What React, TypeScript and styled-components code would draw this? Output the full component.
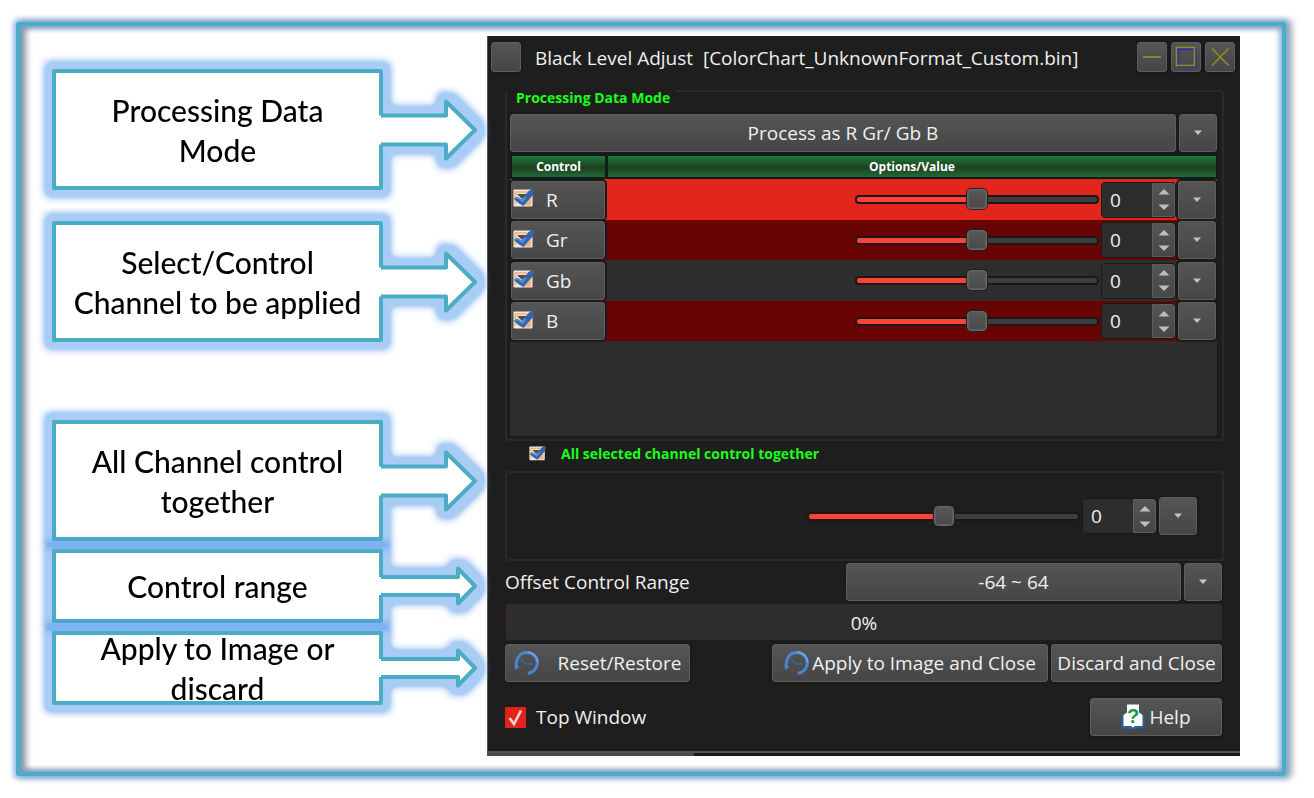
import React, { useState } from 'react';
import styled, { createGlobalStyle } from 'styled-components';

const GlobalStyle = createGlobalStyle`
  *, *::before, *::after { box-sizing: border-box; }
  html, body { margin: 0; background: #fff; }
  button, input, select { font: inherit; color: inherit; margin: 0; }
`;

/* ---------- page frame ---------- */

const Page = styled.div`
  padding: 22px 28px 22px 16px;
`;

const Frame = styled.main`
  display: flex;
  align-items: flex-start;
  gap: 10px;
  padding: 10px 42px 16px 32px;
  border: 4px solid #4bacc6;
  border-radius: 2px;
  box-shadow:
    0 0 5px 3px rgba(80, 140, 225, 0.55),
    inset 0 0 5px 3px rgba(80, 125, 200, 0.6),
    5px 0 6px 2px rgba(0, 0, 0, 0.25),
    inset 6px 0 6px 1px rgba(0, 0, 0, 0.3);
`;

/* ---------- callouts ---------- */

const CalloutColumn = styled.div`
  flex: 0 0 425px;
  display: flex;
  flex-direction: column;
  gap: 78px;
  padding-top: 33px;
`;

const CalloutGroup = styled.div<{ $gap: number }>`
  display: flex;
  flex-direction: column;
  gap: ${(p) => p.$gap}px;
`;

const CalloutRoot = styled.div`
  display: flex;
  align-items: center;
  filter: url(#callout-glow);
`;

const CalloutBox = styled.p<{ $height: number }>`
  flex: 1;
  display: flex;
  align-items: center;
  justify-content: center;
  height: ${(p) => p.$height}px;
  margin: 0;
  padding: 0 8px;
  border: 4px solid #4bacc6;
  border-radius: 2px;
  background: #fff;
  color: #000;
  font: 500 30px/40px Lato, "Liberation Sans", sans-serif;
  text-align: center;
  white-space: pre-line;
`;

const CalloutArrow = styled.svg`
  flex: none;
  margin-left: -4px;
`;

const HiddenDefs = styled.svg`
  position: absolute;
`;

function Callout({ text, size }: { text: string; size: 'large' | 'small' }) {
  const large = size === 'large';
  const d = large
    ? 'M2 17.5H67V3.5L96 32L67 60.5V46.5H2'
    : 'M2 23H79V14.5L96 32L79 49.5V41H2';
  return (
    <CalloutRoot>
      <CalloutBox $height={large ? 121 : 74}>{text}</CalloutBox>
      <CalloutArrow width="98" height="64" viewBox="0 0 98 64" aria-hidden="true">
        <path d={large ? 'M0 17.5H6V46.5H0Z' : 'M0 23H6V41H0Z'} fill="#fff" />
        <path d={d} fill="#fff" stroke="#4bacc6" strokeWidth="4" strokeLinejoin="round" />
      </CalloutArrow>
    </CalloutRoot>
  );
}

/* ---------- dialog ---------- */

const Dialog = styled.section`
  flex: 1;
  min-width: 0;
  min-height: 720px;
  border-left: 1px solid #555;
  background: #1e1e1e;
  color: #f0f0f0;
  font: 19px/24px "Open Sans", "Noto Sans", sans-serif;
  display: flex;
  flex-direction: column;
`;

const raised = `
  border: 1px solid #5e5e5e;
  border-radius: 3px;
  background: linear-gradient(#555, #464646);
  box-shadow: 0 0 0 2px #1a1a1a;
`;

const TitleBar = styled.header`
  display: flex;
  align-items: center;
  gap: 4px;
  height: 54px;
  padding: 6px 5px 18px 3px;
`;

const Title = styled.h1`
  flex: 1;
  margin: 0;
  padding: 2px 0 0 10px;
  font: inherit;
  white-space: pre;
  overflow: hidden;
`;

const WindowButton = styled.button`
  ${raised}
  display: grid;
  place-items: center;
  width: 30px;
  height: 30px;
  padding: 0;
`;

const DialogBody = styled.div`
  display: flex;
  flex-direction: column;
  padding: 0 18px 0 17px;
`;

const Group = styled.section`
  border: 2px solid #2a2a2a;
  border-radius: 4px;
  margin-right: -2px;
`;

const ModeGroup = styled(Group)`
  height: 351px;
  padding: 0 5px 4px 3px;
`;

const GroupHeading = styled.h2`
  width: fit-content;
  height: 18px;
  margin: -2px 0 6px -3px;
  padding: 0 5px 0 9px;
  background: #1e1e1e;
  color: #1cff1c;
  font: bold 14px/16px "Open Sans", "Noto Sans", sans-serif;
`;

const ComboRow = styled.div<{ $width?: string }>`
  display: grid;
  grid-template-columns: 1fr 38px;
  gap: 3px;
  width: ${(p) => p.$width ?? 'auto'};
`;

const Combo = styled.select`
  ${raised}
  appearance: none;
  height: 38px;
  padding: 0;
  text-align: center;
  text-align-last: center;
`;

const SquareButton = styled.button`
  ${raised}
  display: grid;
  place-items: center;
  width: 38px;
  height: 38px;
  padding: 0;
`;

const TablePanel = styled.div`
  height: 281px;
  margin-top: 3px;
  background: #2d2d2d;
  box-shadow: 0 0 0 1px #191919;
`;

const ChannelTable = styled.table`
  width: 100%;
  border-collapse: separate;
  border-spacing: 0;
  table-layout: fixed;
`;

const HeadCell = styled.th<{ $width?: number }>`
  width: ${(p) => (p.$width ? `${p.$width}px` : 'auto')};
  height: 24px;
  padding: 0;
  border: solid #0d1f14;
  border-width: 1px 1px 2px 2px;
  background: linear-gradient(#1b7a3e, #1f4020 55%, #1f6b38);
  color: #fff;
  font: bold 12px/20px "Open Sans", "Noto Sans", sans-serif;
`;

const ChannelRow = styled.tr<{ $color: string }>`
  height: 40px;
  background: ${(p) => p.$color};
  &:nth-child(odd) { height: 41px; }
`;

const Cell = styled.td`
  padding: 0 1px;
`;

const ChannelToggle = styled.label`
  ${raised}
  display: flex;
  align-items: center;
  gap: 12px;
  height: 38px;
  padding-left: 1px;
`;

const Controls = styled.div`
  display: flex;
  align-items: center;
  justify-content: flex-end;
`;

const TickBoxRoot = styled.span<{ $size: number }>`
  position: relative;
  display: block;
  width: ${(p) => p.$size}px;
  height: ${(p) => p.$size}px;
  svg { display: block; pointer-events: none; }
`;

const TickInput = styled.input`
  appearance: none;
  position: absolute;
  inset: 0;
`;

const Slider = styled.input<{ $width: number }>`
  appearance: none;
  width: ${(p) => p.$width}px;
  height: 24px;
  margin-right: 2px;
  background: transparent;
  &::-webkit-slider-runnable-track {
    height: 9px;
    border: 2px solid #1c1616;
    border-radius: 4px;
    background: linear-gradient(90deg, #fb4338 50%, #3d3d3d 50%);
  }
  &::-webkit-slider-thumb {
    appearance: none;
    width: 20px;
    height: 20px;
    margin-top: -8px;
    border: 1px solid #666;
    border-radius: 4px;
    background: linear-gradient(#575757, #4a4a4a);
    box-shadow: inset 0 0 0 1px #5c5c5c, 0 0 0 1px #222;
  }
`;

const SpinRoot = styled.span`
  display: flex;
  width: 75px;
  height: 36px;
  margin-right: 2px;
  border: 1px solid #191919;
  border-radius: 4px;
  background: #2d2d2d;
  overflow: hidden;
`;

const SpinInput = styled.input`
  appearance: textfield;
  width: 50px;
  padding: 0 0 0 8px;
  border: 0;
  background: #2d2d2d;
  &::-webkit-inner-spin-button { appearance: none; }
`;

const SpinButtons = styled.span`
  display: grid;
  flex: 1;
  grid-template-rows: 1fr 1fr;
  border: 1px solid #5e5e5e;
  border-radius: 0 3px 3px 0;
  background: linear-gradient(#555, #464646);
`;

const SpinStep = styled.button`
  display: grid;
  place-items: center;
  padding: 0;
  border: 0;
  background: none;
`;

const TogetherLabel = styled.label`
  display: flex;
  align-items: center;
  gap: 15px;
  height: 26px;
  margin: 0 0 4px 24px;
  color: #1cff1c;
  font: bold 14px/18px "Open Sans", "Noto Sans", sans-serif;
`;

const TogetherGroup = styled(Group)`
  display: flex;
  align-items: center;
  justify-content: flex-end;
  height: 90px;
  padding-right: 25px;
`;

const Row = styled.div<{ $top: number }>`
  display: flex;
  align-items: center;
  justify-content: space-between;
  margin-top: ${(p) => p.$top}px;
`;

const Progress = styled.div`
  height: 36px;
  margin-top: 3px;
  border-radius: 3px;
  border-left: 1px solid #3a1515;
  background: #2d2d2d;
  line-height: 38px;
  text-align: center;
`;

const ButtonPair = styled.div`
  display: flex;
  gap: 3px;
`;

const ActionButton = styled.button<{ $width: number; $gap?: number }>`
  ${raised}
  display: flex;
  align-items: center;
  justify-content: center;
  gap: ${(p) => p.$gap ?? 4}px;
  width: ${(p) => p.$width}px;
  height: 38px;
  padding: 0;
  white-space: nowrap;
`;

const TopWindow = styled.label`
  display: flex;
  align-items: center;
  gap: 10px;
`;

const BottomEdge = styled.div`
  height: 5px;
  margin-top: auto;
  border-top: 2px solid #555;
  background: linear-gradient(90deg, #484848 206px, #1a1a1a 206px);
`;

/* ---------- icons ---------- */

const DownArrow = () => (
  <svg width="10" height="6" viewBox="0 0 10 6" aria-hidden="true">
    <path d="M1 0.5H9L5 5Z" fill="#c4c4c4" />
  </svg>
);

const StepArrow = ({ up }: { up?: boolean }) => (
  <svg width="12" height="7" viewBox="0 0 12 7" aria-hidden="true">
    <path d={up ? 'M0.5 6.5H11.5L6 1Z' : 'M0.5 0.5H11.5L6 6Z'} fill="#bdbdbd" />
  </svg>
);

const CheckArt = ({ size }: { size: number }) => (
  <svg width={size} height={size} viewBox="0 0 21 21" aria-hidden="true">
    <rect x="0.5" y="0.5" width="19" height="17" rx="1" fill="#f3e6da" />
    <path d="M2.5 15V3H14" fill="none" stroke="#f2ac72" strokeWidth="1.6" />
    <path d="M11 16.5H18V8Z" fill="#f7b27a" />
    <path d="M4 5H14L9 10Z" fill="#4c4e52" />
    <path d="M0.5 9.5L4.5 7.8L9 10.8L15 2.5L18.5 0L20.8 1.8L20 6L13.5 13.5L10.5 17L6 14.5Z" fill="#2f66ae" />
    <path d="M1.5 9.8L4.5 8.8L9.5 12.2L13 8" fill="none" stroke="#5292dc" strokeWidth="1.5" />
  </svg>
);

const RestoreIcon = () => (
  <svg width="26" height="26" viewBox="0 0 26 26" aria-hidden="true">
    <path d="M2.5 17C1.5 9 5.5 2.8 13 2.6C19.5 2.6 23.3 7.5 23.3 12.6C23.3 18.5 19 22.8 13.8 23.2" fill="none" stroke="#4a86cf" strokeWidth="3" />
    <path d="M13.5 2.2C20 2.6 23.6 7.5 23.8 12.6" fill="none" stroke="#78adea" strokeWidth="1.2" />
    <path d="M0.5 14.5L5.5 17L1 20Z" fill="#4a86cf" />
    <path d="M6.5 9L12.5 14H19" fill="none" stroke="#3d6a9c" strokeWidth="1.3" />
  </svg>
);

const HelpIcon = () => (
  <svg width="24" height="26" viewBox="0 0 24 26" aria-hidden="true">
    <path d="M0.5 12L3 9V22H21V9L23.5 12V24.5H15L12 26L9 24.5H0.5Z" fill="#2c5f9e" />
    <path d="M2.5 11L6 8.5V0.5H18V8.5L21.5 11V22H14L12 23.5L10 22H2.5Z" fill="#fff" />
    <text x="12" y="19" textAnchor="middle" fontFamily="Liberation Sans, sans-serif" fontWeight="bold" fontSize="20" fill="#119a4c">?</text>
  </svg>
);

const TopTick = () => (
  <svg width="21" height="21" viewBox="0 0 21 21" aria-hidden="true">
    <rect width="21" height="21" rx="1" fill="#e3221a" />
    <path d="M4.5 11L9 17L16 3.5" fill="none" stroke="#e6d6d6" strokeWidth="2.6" />
  </svg>
);

/* ---------- parts ---------- */

function TickBox({ size, children }: { size: number; children: React.ReactNode }) {
  return (
    <TickBoxRoot $size={size}>
      <TickInput type="checkbox" defaultChecked />
      {children}
    </TickBoxRoot>
  );
}

function ValueControl({ name, width }: { name: string; width: number }) {
  const [value, setValue] = useState(0);
  return (
    <Controls>
      <Slider
        $width={width}
        type="range"
        min={-64}
        max={64}
        value={value}
        aria-label={`${name} offset`}
        onChange={(e) => setValue(Number(e.target.value))}
      />
      <SpinRoot>
        <SpinInput
          type="number"
          min={-64}
          max={64}
          value={value}
          aria-label={`${name} value`}
          onChange={(e) => setValue(Number(e.target.value))}
        />
        <SpinButtons>
          <SpinStep type="button" aria-label={`Increase ${name}`} onClick={() => setValue(Math.min(64, value + 1))}>
            <StepArrow up />
          </SpinStep>
          <SpinStep type="button" aria-label={`Decrease ${name}`} onClick={() => setValue(Math.max(-64, value - 1))}>
            <StepArrow />
          </SpinStep>
        </SpinButtons>
      </SpinRoot>
      <SquareButton type="button" aria-label={`${name} menu`}>
        <DownArrow />
      </SquareButton>
    </Controls>
  );
}

const channels = [
  { name: 'R', color: '#e3261b' },
  { name: 'Gr', color: '#680504' },
  { name: 'Gb', color: '#2d2d2d' },
  { name: 'B', color: '#680504' },
];

export default function App() {
  return (
    <>
      <GlobalStyle />
      <HiddenDefs width="0" height="0" aria-hidden="true">
        <filter id="callout-glow" x="-10%" y="-40%" width="120%" height="180%" colorInterpolationFilters="sRGB">
          <feMorphology in="SourceAlpha" operator="dilate" radius="6" />
          <feGaussianBlur stdDeviation="4" />
          <feComponentTransfer result="halo">
            <feFuncA type="linear" slope="2.4" />
          </feComponentTransfer>
          <feFlood floodColor="#5097eb" floodOpacity="0.49" />
          <feComposite in2="halo" operator="in" />
          <feMerge>
            <feMergeNode />
            <feMergeNode in="SourceGraphic" />
          </feMerge>
        </filter>
      </HiddenDefs>
      <Page>
        <Frame>
          <CalloutColumn>
            <CalloutGroup $gap={31}>
              <Callout size="large" text={'Processing Data\nMode'} />
              <Callout size="large" text={'Select/Control\nChannel to be applied'} />
            </CalloutGroup>
            <CalloutGroup $gap={8}>
              <Callout size="large" text={'All Channel control\ntogether'} />
              <Callout size="small" text="Control range" />
              <Callout size="small" text={'Apply to Image or\ndiscard'} />
            </CalloutGroup>
          </CalloutColumn>

          <Dialog aria-label="Black Level Adjust">
            <TitleBar>
              <WindowButton type="button" aria-label="Window menu" />
              <Title>{'Black Level Adjust  [ColorChart_UnknownFormat_Custom.bin]'}</Title>
              <WindowButton type="button" aria-label="Minimize">
                <svg width="20" height="20" viewBox="0 0 20 20"><path d="M1 10H19" stroke="#8f8a1c" strokeWidth="1.8" /></svg>
              </WindowButton>
              <WindowButton type="button" aria-label="Maximize">
                <svg width="22" height="22" viewBox="0 0 22 22" fill="none">
                  <rect x="3" y="3" width="17.5" height="17.5" stroke="#2c2ca8" strokeWidth="2" />
                  <rect x="1.5" y="1.5" width="18" height="18" stroke="#918b22" strokeWidth="1.6" />
                </svg>
              </WindowButton>
              <WindowButton type="button" aria-label="Close">
                <svg width="20" height="20" viewBox="0 0 20 20"><path d="M2 1.5L18.5 18.5M18.5 1.5L2 18.5" stroke="#918b22" strokeWidth="1.7" /></svg>
              </WindowButton>
            </TitleBar>

            <DialogBody>
              <ModeGroup aria-labelledby="mode-heading">
                <GroupHeading id="mode-heading">Processing Data Mode</GroupHeading>
                <ComboRow>
                  <Combo aria-label="Processing data mode">
                    <option>Process as R Gr/ Gb B</option>
                  </Combo>
                  <SquareButton type="button" aria-label="Mode menu"><DownArrow /></SquareButton>
                </ComboRow>
                <TablePanel>
                  <ChannelTable>
                    <thead>
                      <tr>
                        <HeadCell $width={96}>Control</HeadCell>
                        <HeadCell>Options/Value</HeadCell>
                      </tr>
                    </thead>
                    <tbody>
                      {channels.map((c) => (
                        <ChannelRow key={c.name} $color={c.color}>
                          <Cell>
                            <ChannelToggle>
                              <TickBox size={21}><CheckArt size={21} /></TickBox>
                              {c.name}
                            </ChannelToggle>
                          </Cell>
                          <Cell>
                            <ValueControl name={c.name} width={244} />
                          </Cell>
                        </ChannelRow>
                      ))}
                    </tbody>
                  </ChannelTable>
                </TablePanel>
              </ModeGroup>

              <TogetherLabel>
                <TickBox size={17}><CheckArt size={17} /></TickBox>
                All selected channel control together
              </TogetherLabel>
              <TogetherGroup aria-label="All selected channels">
                <ValueControl name="All channels" width={273} />
              </TogetherGroup>

              <Row $top={2}>
                <label htmlFor="range">Offset Control Range</label>
                <ComboRow $width="376px">
                  <Combo id="range"><option>-64 ~ 64</option></Combo>
                  <SquareButton type="button" aria-label="Range menu"><DownArrow /></SquareButton>
                </ComboRow>
              </Row>
              <Progress role="progressbar" aria-label="Progress" aria-valuenow={0}>0%</Progress>
              <Row $top={4}>
                <ActionButton type="button" $width={185} $gap={18}><RestoreIcon />Reset/Restore</ActionButton>
                <ButtonPair>
                  <ActionButton type="button" $width={276} $gap={2}><RestoreIcon />Apply to Image and Close</ActionButton>
                  <ActionButton type="button" $width={171}>Discard and Close</ActionButton>
                </ButtonPair>
              </Row>
              <Row $top={16}>
                <TopWindow>
                  <TickBox size={21}><TopTick /></TickBox>
                  Top Window
                </TopWindow>
                <ActionButton type="button" $width={132}><HelpIcon />Help</ActionButton>
              </Row>
            </DialogBody>
            <BottomEdge />
          </Dialog>
        </Frame>
      </Page>
    </>
  );
}
